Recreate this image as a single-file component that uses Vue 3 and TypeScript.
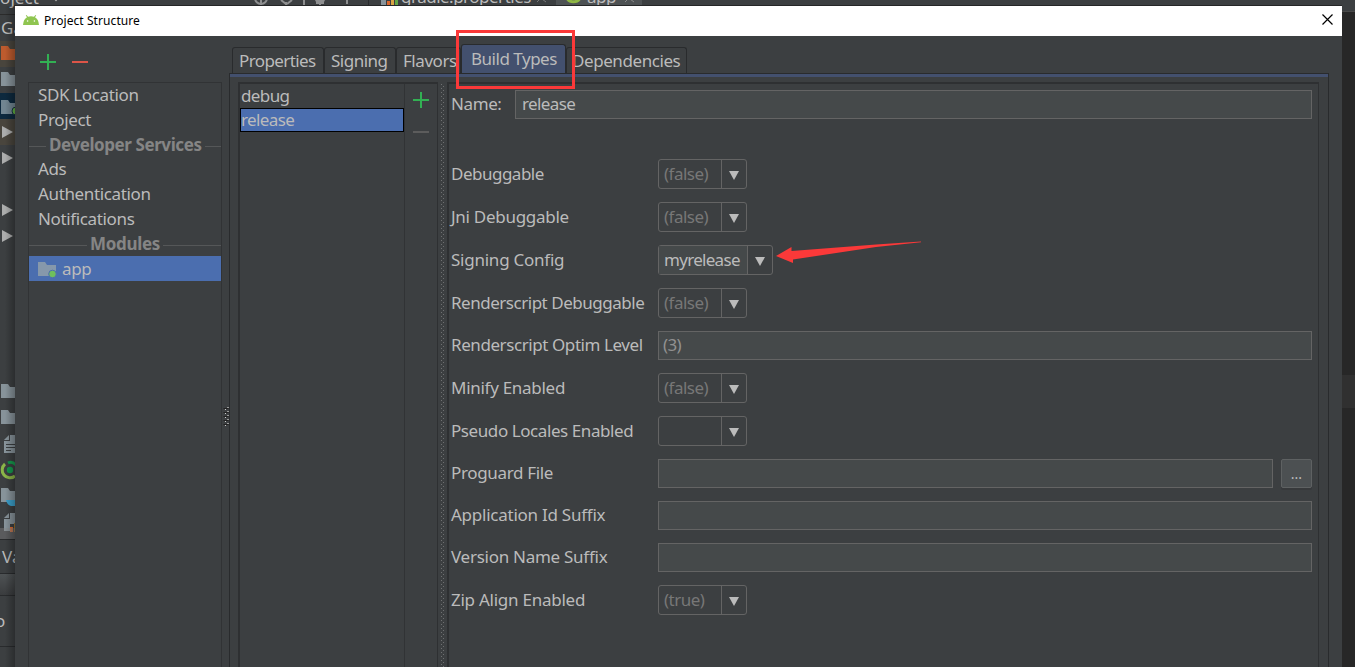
<script setup lang="ts">
interface Field {
  label: string
  kind: 'combo' | 'text' | 'file'
  value: string
  tracking: number
  set?: boolean
}

const fields: Field[] = [
  { label: 'Debuggable', kind: 'combo', value: '(false)', tracking: -0.5 },
  { label: 'Jni Debuggable', kind: 'combo', value: '(false)', tracking: -0.28 },
  { label: 'Signing Config', kind: 'combo', value: 'myrelease', tracking: -0.24, set: true },
  { label: 'Renderscript Debuggable', kind: 'combo', value: '(false)', tracking: -0.48 },
  { label: 'Renderscript Optim Level', kind: 'text', value: '(3)', tracking: -0.42 },
  { label: 'Minify Enabled', kind: 'combo', value: '(false)', tracking: -0.28 },
  { label: 'Pseudo Locales Enabled', kind: 'combo', value: '', tracking: -0.42 },
  { label: 'Proguard File', kind: 'file', value: '', tracking: -0.35 },
  { label: 'Application Id Suffix', kind: 'text', value: '', tracking: -0.25 },
  { label: 'Version Name Suffix', kind: 'text', value: '', tracking: -0.27 },
  { label: 'Zip Align Enabled', kind: 'combo', value: '(true)', tracking: -0.25 },
]

const tabs = [
  { name: 'Properties', cls: 't-properties' },
  { name: 'Signing', cls: 't-signing' },
  { name: 'Flavors', cls: 't-flavors' },
  { name: 'Build Types', cls: 't-build active' },
  { name: 'Dependencies', cls: 't-deps' },
]
</script>

<template>
  <div class="desktop">
    <!-- IDE window behind the dialog -->
    <svg class="ide" width="1355" height="667" viewBox="0 0 1355 667">
      <defs>
        <linearGradient id="bar" x1="0" y1="0" x2="0" y2="1">
          <stop offset="0" stop-color="#4e5254" /><stop offset="1" stop-color="#3a3c3e" />
        </linearGradient>
        <linearGradient id="shade" x1="0" y1="0" x2="1" y2="0">
          <stop offset="0" stop-color="#000" stop-opacity="0" /><stop offset="1" stop-color="#000" stop-opacity=".28" />
        </linearGradient>
        <path id="folder" d="M1 0H8L10 3H16V14H1Z" />
        <path id="tri" d="M2 0L13 6L2 12Z" />
        <g id="doc"><path d="M10 0H17V18H4V6H10Z" fill="#87939a" /><path d="M9 0V5H4Z" fill="#87939a" /></g>
      </defs>
      <rect width="1355" height="667" fill="#3c3f41" />
      <rect y="14" width="15" height="1" fill="#2b2b2b" />
      <text x="0" y="4" class="ide-text">oject</text>
      <circle cx="56" cy="0" r="1.2" fill="#999" />
      <g stroke="#8e8f90" stroke-width="2" fill="none">
        <circle cx="261" cy="-2" r="6" /><path d="M261-8V5M281 0l5 4M292 0l-5 4M286 2V5M304 0V5M316 3h8M320 0V5M347 0V4" />
      </g>
      <path d="M315 0h10l-2 4h-6Z" fill="#8e8f90" />
      <rect x="368" width="1" height="6" fill="#292b2d" />
      <path d="M381 0h5v5h-5Z" fill="#87939a" /><path d="M387 1h3v4h-3Z" fill="#d9662d" />
      <path d="M391 0h3v5h-3Z" fill="#d9a343" /><path d="M395 0h3v5h-3Z" fill="#62a545" />
      <text x="401" y="3" class="ide-text file">gradle.properties</text>
      <path d="M537 2l3-3M542-1l4 3" stroke="#777" />
      <rect x="556" width="86" height="6" fill="#4e5254" />
      <path d="M567-2a7 6 0 0 0 13 0" fill="none" stroke="#8fb744" stroke-width="3" />
      <text x="587" y="3" class="ide-text file">app</text>
      <path d="M625 2l3-3M630-1l4 3" stroke="#888" />
      <text x="1" y="34" class="ide-text">Ga</text>
      <rect y="41" width="15" height="26" fill="#49453d" />
      <use href="#folder" y="46" fill="#bd5b2e" />
      <use href="#folder" y="72" fill="#87939a" />
      <rect y="93" width="15" height="26" fill="#0d293e" />
      <use href="#folder" y="100" fill="#718591" />
      <circle cx="16" cy="111" r="4" fill="#62b543" stroke="#173044" />
      <rect y="119" width="15" height="26" fill="#49453d" />
      <g fill="#acadad">
        <use href="#tri" y="126" /><use href="#tri" y="152" /><use href="#tri" y="204" /><use href="#tri" y="230" />
      </g>
      <use href="#folder" y="384" fill="#87939a" />
      <use href="#folder" y="410" fill="#87939a" />
      <use href="#doc" y="435" />
      <path d="M6 444.500h9M6 447.500h9M6 450.500h5" stroke="#3c3f41" />
      <path d="M5 464A7.500 7.500 0 1 0 15 476" fill="none" stroke="#8ab648" stroke-width="3" />
      <path d="M8 463q4-2 8 2" stroke="#16994d" stroke-width="3" fill="none" />
      <circle cx="10" cy="470" r="3.200" fill="#16994d" />
      <use href="#folder" y="488" fill="#87939a" />
      <path d="M6 500h9v6h-4q-4-1-5-6Z" fill="#3b9fca" />
      <use href="#doc" y="513" />
      <path d="M10 524h5v8h-5Z" fill="#3c3f41" /><path d="M10 527h3v5h-3Z" fill="#db6c33" /><path d="M14 523h1v9h-1Z" fill="#9b7430" />
      <rect y="528" width="15" height="11" fill="#888" opacity=".4" />
      <path d="M0 539.500h15M0 573.500h15M0 595.500h15M0 646.500h15" stroke="#292b2d" />
      <text x="2" y="563" class="ide-text">Va</text>
      <rect y="574" width="15" height="21" fill="url(#bar)" />
      <text x="-5" y="627" class="ide-text">o</text>
      <rect y="6" x="5" width="10" height="661" fill="url(#shade)" />
      <rect x="1342" y="12" width="13" height="655" fill="#272727" />
      <rect x="1342" y="11" width="13" height="1" fill="#4a4a4a" />
      <rect x="1342" y="375" width="13" height="33" fill="#303030" />
      <rect x="14" y="5" width="1328" height="1" fill="#252627" />
    </svg>

    <section class="dialog">
      <header class="titlebar">
        <svg class="robot" width="16" height="10" viewBox="0 0 16 10">
          <path d="M0 10Q.5 4 4 2.2L2.8.4 3.5 0 5 1.8Q8 .7 11 1.8L12.5 0l.7.4L12 2.2Q15.500 4 16 10Z" fill="#8fc550" />
          <circle cx="4.600" cy="6" r=".8" fill="#fff" /><circle cx="11.400" cy="6" r=".8" fill="#fff" />
        </svg>
        <span class="title">Project Structure</span>
        <svg class="close" width="11" height="11" viewBox="0 0 11 11"><path d="M.5.5l10 10M10.500.5l-10 10" stroke="#000" stroke-width="1.200" /></svg>
      </header>

      <div class="body">
        <aside class="side">
          <div class="side-tools">
            <svg width="16" height="16" viewBox="0 0 16 16"><path d="M8 0V16M0 8H16" stroke="#32b053" stroke-width="2" /></svg>
            <svg width="16" height="16" viewBox="0 0 16 16"><path d="M0 8H16" stroke="#dc5548" stroke-width="2" /></svg>
          </div>
          <nav class="side-list">
            <div class="item">SDK Location</div>
            <div class="item">Project</div>
            <div class="sep dev"><span>Developer Services</span></div>
            <div class="item">Ads</div>
            <div class="item">Authentication</div>
            <div class="item">Notifications</div>
            <div class="sep mod"><span>Modules</span></div>
            <div class="item selected">
              <svg width="20" height="17" viewBox="0 0 20 17">
                <path d="M1 1H8L10 4H19V15H1Z" fill="#8698ab" />
                <circle cx="15.500" cy="13" r="3.800" fill="#6fbf5c" stroke="#4b6eaf" />
              </svg>
              <span>app</span>
            </div>
          </nav>
        </aside>

        <div class="grip">
          <svg width="6" height="19" viewBox="0 0 6 19">
            <path d="M3 1V19" stroke="#222" stroke-width="5" stroke-dasharray="1 3" />
            <path d="M2.500 2V19" stroke="#ccc" stroke-dasharray="1 3" />
            <path d="M5 0V19" stroke="#999" stroke-width="2" stroke-dasharray="1 3" />
          </svg>
        </div>

        <main class="main">
          <div class="tabs">
            <div v-for="t in tabs" :key="t.name" class="tab" :class="t.cls"><span>{{ t.name }}</span></div>
          </div>
          <div class="pane">
            <div class="types">
              <div class="type-list">
                <div class="type">debug</div>
                <div class="type current">release</div>
              </div>
              <div class="type-tools">
                <svg width="16" height="16" viewBox="0 0 16 16"><path d="M8 0V16M0 8H16" stroke="#32b053" stroke-width="2" /></svg>
                <svg width="16" height="16" viewBox="0 0 16 16"><path d="M0 8H16" stroke="#5c5c5c" stroke-width="2" /></svg>
              </div>
            </div>
            <div class="dots"></div>
            <div class="form">
              <div class="name-row">
                <span class="name-label">Name:</span>
                <div class="input bright">release</div>
              </div>
              <div class="rows">
                <div v-for="f in fields" :key="f.label" class="row" :class="'row-' + f.kind">
                  <span class="label" :style="{ letterSpacing: f.tracking + 'px' }">{{ f.label }}</span>
                  <div v-if="f.kind === 'combo'" class="combo" :class="{ set: f.set }">
                    <span class="val">{{ f.value }}</span>
                    <span class="arrow"><svg width="10" height="9" viewBox="0 0 10 9"><path d="M0 0H10L5 9Z" fill="#bbb" /></svg></span>
                  </div>
                  <div v-else class="input">{{ f.value }}</div>
                  <div v-if="f.kind === 'file'" class="browse">...</div>
                </div>
              </div>
            </div>
          </div>
        </main>
      </div>
    </section>

    <div class="highlight"></div>
    <svg class="pointer" width="146" height="22" viewBox="0 0 146 22">
      <path d="M0 15L15.500 6V10L100 3.500L145 .5V1.200L100 6L17 18.500V22Z" fill="#fb3939" />
    </svg>
  </div>
</template>

<style>
body { margin: 0; background: #3c3f41; }
</style>

<style scoped>
.desktop {
  position: relative;
  width: 1355px;
  height: 667px;
  overflow: hidden;
  background: #3c3f41;
  color: #bbb;
  font: 17px/24px "Noto Sans", "Open Sans", sans-serif;
  white-space: nowrap;
}
.desktop * { box-sizing: border-box; }
svg { display: block; flex: none; }
.ide { position: absolute; left: 0; top: 0; }
.ide-text { font: 17px "Noto Sans", sans-serif; fill: #bbb; letter-spacing: 0.1px; }
.ide-text.file { letter-spacing: -0.5px; }
.dialog {
  position: absolute;
  left: 15px;
  top: 6px;
  width: 1327px;
  height: 661px;
  background: #3c3f41;
  display: flex;
  flex-direction: column;
}
.titlebar {
  height: 30px;
  flex: none;
  background: #fff;
  display: flex;
  align-items: center;
  padding: 0 9px 0 8px;
}
.robot { margin-bottom: 2px; }
.title { color: #000; font-size: 12px; margin-left: 5px; flex: 1; letter-spacing: 0.08px; }
.close { margin-bottom: 3px; }
.body { flex: 1; display: flex; min-height: 0; }
.side { width: 207px; padding-left: 13px; display: flex; flex-direction: column; letter-spacing: -0.36px; }
.side-tools { height: 46px; flex: none; padding: 18px 0 0 12px; display: flex; gap: 16px; }
.side-list { width: 194px; flex: 1; border: 1px solid #313335; border-bottom: 0; }
.item { height: 25px; padding-left: 9px; line-height: 23px; }
.sep {
  display: flex;
  align-items: center;
  height: 24px;
  font-weight: bold;
  color: #858585;
  line-height: 24px;
  letter-spacing: -0.42px;
}
.sep.mod { letter-spacing: -0.3px; }
.sep::before, .sep::after { content: ""; height: 1px; background: #555758; margin-top: 2px; }
.sep::before { width: 17px; margin-right: 3px; }
.sep::after { flex: 1; margin-left: 3px; }
.sep.mod::before { width: 58px; }
.sep.mod span { position: relative; top: -0.5px; }
.item.selected { background: #4b6eaf; display: flex; align-items: center; gap: 4px; }
.item.selected svg { margin: 1px 0 0 -1px; }
.item.selected span { margin-left: 1px; }
.grip { width: 7px; padding: 371px 0 0 1px; }
.main { width: 1100px; display: flex; flex-direction: column; }
.tabs { height: 37px; display: flex; align-items: flex-end; padding-left: 3px; flex: none; }
.tab {
  height: 26px;
  border: 1px solid #292b2d;
  border-bottom: 0;
  border-radius: 3px 3px 0 0;
  display: flex;
  justify-content: flex-start;
  line-height: 26px;
}
.t-properties { width: 92px; padding-left: 6px; letter-spacing: -0.6px; }
.t-signing { width: 72px; padding-left: 6px; letter-spacing: -0.5px; }
.t-flavors { width: 65px; padding-left: 6px; letter-spacing: -0.45px; }
.t-build { width: 105px; padding-left: 9px; letter-spacing: -0.48px; }
.t-deps { width: 121px; padding-left: 5px; letter-spacing: -0.42px; }
.tab.active { height: 29px; background: #43506e; line-height: 27px; }
.pane {
  flex: 1;
  min-height: 0;
  border: 1px solid #292b2d;
  border-bottom: 0;
  box-shadow: inset 0 3px #43506e;
  padding: 8px 9px 0 8px;
  display: flex;
}
.types { width: 200px; border: 1px solid #2e3032; border-width: 2px 1px 0 2px; display: flex; }
.type-list { width: 164px; letter-spacing: -0.6px; }
.type { height: 24px; padding-left: 1px; line-height: 23px; }
.type.current { background: #4b6eaf; border: 1px solid #000; padding-left: 0; line-height: 22px; }
.type-tools {
  width: 33px;
  border-left: 1px solid #313335;
  padding: 8px 0 0 8px;
  display: flex;
  flex-direction: column;
  gap: 16px;
}
.dots {
  width: 4px;
  margin: 2px 2px 0 3px;
  background-image: linear-gradient(#6e7071, #6e7071), linear-gradient(#6e7071, #6e7071);
  background-size: 4px 4px;
  background-repeat: repeat;
  background-image: conic-gradient(from 0deg at 1px 1px, transparent 75%, #6e7071 0), conic-gradient(from 0deg at 1px 1px, transparent 75%, #6e7071 0);
  background-position: 0 0, 2px 2px;
}
.form {
  flex: 1;
  border: 1px solid #2e3032;
  border-width: 2px 1px 0 2px;
  padding: 6px 6px 0 2px;
}
.name-row { display: flex; height: 29px; line-height: 28px; }
.name-label { width: 64px; letter-spacing: -0.4px; }
.input {
  flex: 1;
  height: 29px;
  border: 1px solid #646464;
  background: #45494a;
  color: #919191;
  padding-left: 4px;
  line-height: 26px;
  letter-spacing: -0.6px;
}
.input.bright { color: #bbb; padding-left: 6px; }
.rows { margin-top: 40px; display: flex; flex-direction: column; gap: 13px; }
.row { display: flex; height: 29px; }
.row-combo { height: 30px; }
.label { width: 207px; line-height: 27px; }
.row-combo .label { line-height: 29px; }
.combo {
  width: 89px;
  height: 30px;
  border: 1px solid #646464;
  border-radius: 3px;
  display: flex;
  color: #777;
  letter-spacing: -0.5px;
}
.combo.set { width: 115px; color: #bbb; letter-spacing: -0.7px; }
.val { flex: 1; padding-left: 5px; line-height: 28px; border-right: 1px solid #646464; }
.set .val { background: #45494a; }
.arrow { width: 24px; display: flex; align-items: center; justify-content: center; padding-top: 2px; }
.browse {
  width: 31px;
  height: 29px;
  margin-left: 8px;
  border: 1px solid #5e6162;
  border-radius: 2px;
  background: #4c5052;
  box-shadow: 0 2px #37393b;
  text-align: center;
  font-size: 14px;
  line-height: 28px;
}
.highlight {
  position: absolute;
  left: 456px;
  top: 30px;
  width: 119px;
  height: 59px;
  border: 3px solid #fb3939;
}
.pointer { position: absolute; left: 776px; top: 241px; }
</style>
